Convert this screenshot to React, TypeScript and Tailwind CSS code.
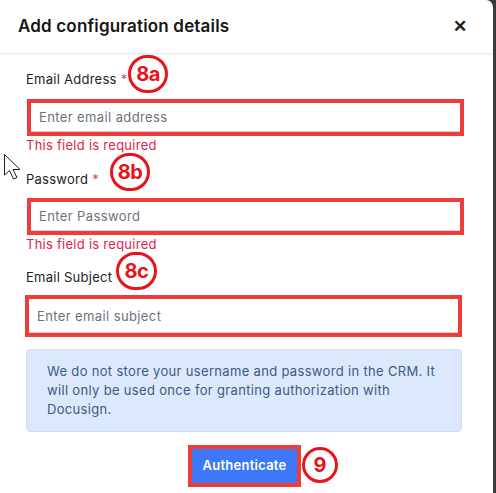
import React from "react";

const FONT = { fontFamily: "Inter, 'Noto Sans', sans-serif" };

function Badge({ label, className }: { label: string; className: string }) {
  return (
    <span
      className={`absolute flex items-center justify-center rounded-full border-[3px] border-[#e8141b] bg-white text-[20px] font-bold tracking-tight text-[#e8141b] ${className}`}
    >
      {label}
    </span>
  );
}

function Field({
  label,
  placeholder,
  required,
  error,
  badge,
  badgeClass,
  boxClass,
}: {
  label: string;
  placeholder: string;
  required?: boolean;
  error?: boolean;
  badge: string;
  badgeClass: string;
  boxClass: string;
}) {
  return (
    <div>
      <div className="relative flex h-5 items-center text-[13px] tracking-[0.02em] text-[#222]">
        {label}
        {required && <span className="ml-1 text-[#e0455f]">*</span>}
        <Badge label={badge} className={badgeClass} />
      </div>
      <div className={`border-4 border-[#f03b3b] ${boxClass}`}>
        <input
          placeholder={placeholder}
          className="h-full w-full border-b border-[#cfcfcf] bg-white px-2 text-[13px] tracking-[0.03em] text-[#333] outline-none placeholder:text-[#6b7280]"
          style={FONT}
        />
      </div>
      {error && (
        <div className="h-[18px] text-[13px] leading-[18px] tracking-[0.02em] text-[#e0244a]">
          This field is required
        </div>
      )}
    </div>
  );
}

export default function App() {
  return (
    <div className="flex h-[493px] w-[496px] bg-[#3a3a3a]" style={FONT}>
      <div className="relative flex w-[493px] flex-col rounded-tr-[7px] bg-white">
        <div className="flex h-[54px] items-center justify-between border-b border-[#ececec] pl-[18px] pr-[26px] shadow-[0_1px_2px_rgba(0,0,0,0.04)]">
          <h2 className="text-[17px] font-semibold tracking-[0.01em] text-[#161616]">
            Add configuration details
          </h2>
          <span className="text-[17px] font-bold text-[#222]">✕</span>
        </div>

        <div className="flex flex-col px-[26px] pt-4">
          <Field
            label="Email Address"
            placeholder="Enter email address"
            required
            error
            badge="8a"
            badgeClass="left-[102px] top-[-15px] h-[38px] w-[40px]"
            boxClass="mt-[9px] mr-[3px] ml-px h-[37px]"
          />
          <div className="mt-4">
            <Field
              label="Password"
              placeholder="Enter Password"
              required
              error
              badge="8b"
              badgeClass="left-[84px] top-[-17px] h-[38px] w-[40px]"
              boxClass="mt-[8px] mr-[3px] ml-px h-[37px]"
            />
          </div>
          <div className="mt-[15px]">
            <Field
              label="Email Subject"
              placeholder="Enter email subject"
              badge="8c"
              badgeClass="left-[90px] top-[-16px] h-[38px] w-[41px]"
              boxClass="mt-[7px] mr-[5px] -ml-px h-[42px]"
            />
          </div>

          <div className="mt-3 mr-[5px] rounded border border-[#cde0fa] bg-[#dce9fc] py-[12px] pl-5 pr-[22px] text-[13px] leading-[19px] tracking-[0.025em] text-[#3d5a85]">
            We do not store your username and password in the CRM. It will only be used once for granting authorization with Docusign.
          </div>

          <div className="relative mt-[13px] flex justify-center">
            <div className="ml-[-4px] border-4 border-[#f03b3b]">
              <button
                type="button"
                className="flex h-[34px] w-[105px] items-center justify-center bg-[#3c78f8] text-[13px] font-semibold tracking-[0.02em] text-white"
              >
                Authenticate
              </button>
            </div>
            <span className="absolute left-[276px] top-[2px] flex h-[36px] w-[36px] items-center justify-center rounded-full border-[3px] border-[#e8141b] text-[20px] font-bold text-[#e8141b]">
              9
            </span>
          </div>
        </div>

        <svg
          className="absolute left-[3px] top-[153px]"
          width="20"
          height="28"
          viewBox="0 0 20 28"
        >
          <path
            d="M1.5 1.5 L1.5 22 L6.5 17.5 L10.5 26 L14 24.5 L10 16.5 L17 16.5 Z"
            fill="white"
            stroke="#222"
            strokeWidth="1"
          />
        </svg>
      </div>
    </div>
  );
}
